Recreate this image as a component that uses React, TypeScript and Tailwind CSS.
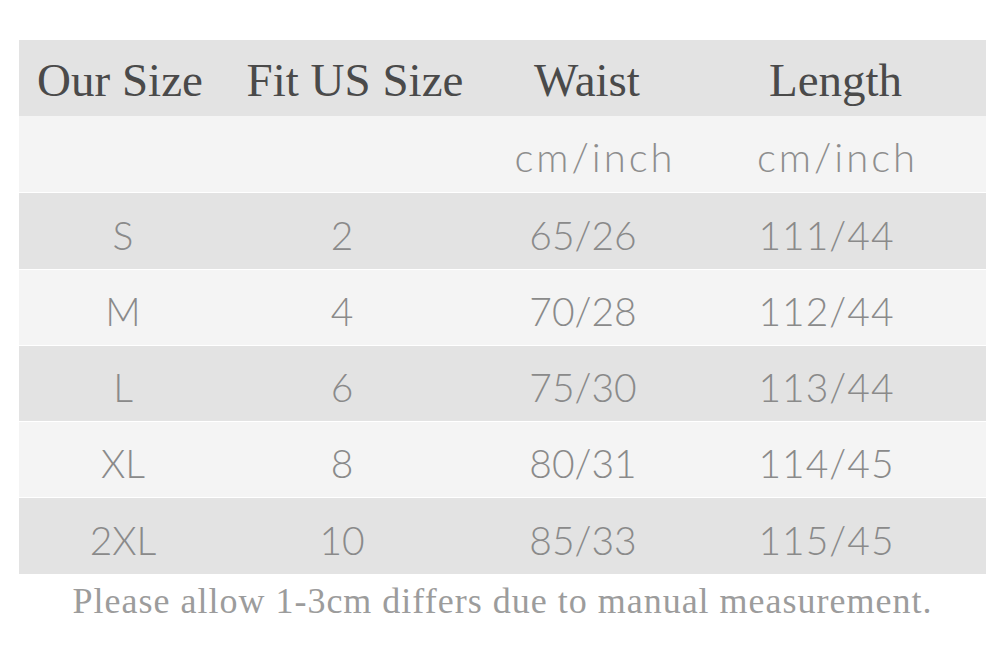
import React from "react";

const serif = "font-['Liberation_Serif','Times_New_Roman',serif]";
const sans = "font-['Lato','Liberation_Sans',sans-serif]";

const rows = [
  ["S", "2", "65/26", "111/44"],
  ["M", "4", "70/28", "112/44"],
  ["L", "6", "75/30", "113/44"],
  ["XL", "8", "80/31", "114/45"],
  ["2XL", "10", "85/33", "115/45"],
];

const rowH = ["h-[77px]", "h-[76px]", "h-[76px]", "h-[76px]", "h-[77px]"];

export default function App() {
  return (
    <div className="w-[1000px] h-[649px] bg-white pt-[40px] pl-[19px] pr-[14px] overflow-hidden">
      <div className="flex flex-col w-[967px]">
        <div className={`grid grid-cols-[202px_268px_196px_301px] h-[76px] bg-[#e3e3e3] items-center text-[47px] text-[#4a4a4a] ${serif} leading-none`}>
          <div className="text-center pt-[4px]">Our Size</div>
          <div className="text-center pt-[4px]">Fit US Size</div>
          <div className="text-center pt-[4px]">Waist</div>
          <div className="text-center pt-[4px]">Length</div>
        </div>
        <div className={`grid grid-cols-[202px_268px_196px_301px] h-[76px] bg-[#f4f4f4] items-center text-[40px] text-[#8e8e8e] ${sans} font-light leading-none tracking-[3px]`}>
          <div />
          <div />
          <div className="text-center pl-[16px] pt-[6px]">cm/inch</div>
          <div className="text-center pl-[4px] pt-[6px]">cm/inch</div>
        </div>
        {rows.map((r, i) => (
          <div
            key={r[0]}
            className={`grid grid-cols-[202px_268px_196px_301px] ${rowH[i]} border-t border-white items-center text-[39px] text-[#8a8a8a] ${sans} font-light leading-none ${i % 2 === 0 ? "bg-[#e3e3e3]" : "bg-[#f4f4f4]"}`}
          >
            <div className="text-center pl-[6px] pt-[8px]">{r[0]}</div>
            <div className="text-center pr-[26px] pt-[8px]">{r[1]}</div>
            <div className="text-center pr-[8px] pt-[8px]">{r[2]}</div>
            <div className="text-center pr-[18px] pt-[8px] tracking-[1px]">{r[3]}</div>
          </div>
        ))}
      </div>
      <div className={`w-[967px] text-center pt-[9px] text-[36px] tracking-[1px] text-[#9c9c9c] ${serif} leading-none`}>
        Please allow 1-3cm differs due to manual measurement.
      </div>
    </div>
  );
}
